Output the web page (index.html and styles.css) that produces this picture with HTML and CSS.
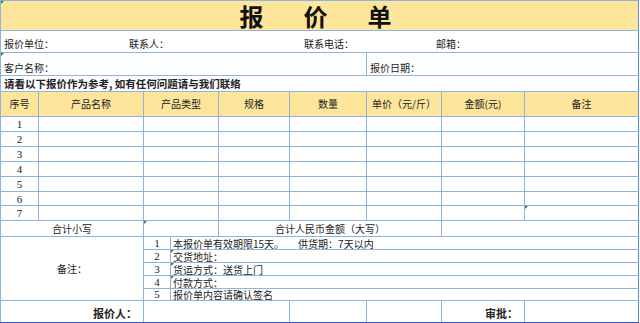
FILE: index.html
```html
<!DOCTYPE html>
<html lang="zh">
<head>
<meta charset="utf-8">
<link rel="stylesheet" href="styles.css">
</head>
<body>
<table class="sheet">
  <colgroup>
    <col style="width:38px"><col style="width:105px"><col style="width:27px"><col style="width:48px"><col style="width:71px">
    <col style="width:77px"><col style="width:27px"><col style="width:48px"><col style="width:83px"><col style="width:114px">
  </colgroup>
  <tr class="r-title">
    <td colspan="10" class="title mark"><div class="title-chars"><span>报</span><span>价</span><span>单</span></div></td>
  </tr>
  <tr class="r-info">
    <td colspan="10" class="info"><div class="info-grid"><span>报价单位：</span><span>联系人：</span><span>联系电话：</span><span>邮箱：</span></div></td>
  </tr>
  <tr class="r-client">
    <td colspan="6" class="bottom mark">客户名称：</td>
    <td colspan="4" class="bottom">报价日期：</td>
  </tr>
  <tr class="r-note">
    <td colspan="10" class="notice">请看以下报价作为参考, 如有任何问题请与我们联络</td>
  </tr>
  <tr class="r-head">
    <td class="c">序号</td>
    <td class="c">产品名称</td>
    <td colspan="2" class="c">产品类型</td>
    <td class="c">规格</td>
    <td class="c">数量</td>
    <td colspan="2" class="c">单价（元/斤）</td>
    <td class="c">金额(元)</td>
    <td class="c">备注</td>
  </tr>
  <tr class="r-data"><td class="c num">1</td><td></td><td colspan="2"></td><td></td><td></td><td colspan="2"></td><td></td><td></td></tr>
  <tr class="r-data"><td class="c num">2</td><td></td><td colspan="2"></td><td></td><td></td><td colspan="2"></td><td></td><td></td></tr>
  <tr class="r-data"><td class="c num">3</td><td></td><td colspan="2"></td><td></td><td></td><td colspan="2"></td><td></td><td></td></tr>
  <tr class="r-data"><td class="c num">4</td><td></td><td colspan="2"></td><td></td><td></td><td colspan="2"></td><td></td><td></td></tr>
  <tr class="r-data"><td class="c num">5</td><td></td><td colspan="2"></td><td></td><td></td><td colspan="2"></td><td></td><td></td></tr>
  <tr class="r-data short"><td class="c num">6</td><td></td><td colspan="2"></td><td></td><td></td><td colspan="2"></td><td></td><td></td></tr>
  <tr class="r-data"><td class="c num">7</td><td></td><td colspan="2"></td><td></td><td></td><td colspan="2"></td><td></td><td class="mark"></td></tr>
  <tr class="r-sum">
    <td colspan="2" class="c">合计小写</td>
    <td colspan="2" class="mark"></td>
    <td colspan="4" class="c">合计人民币金额（大写）</td>
    <td colspan="3"></td>
  </tr>
  <tr class="r-rem">
    <td colspan="2" rowspan="5" class="c">备注：</td>
    <td class="c num">1</td>
    <td colspan="7" class="txt">本报价单有效期限15天。<span class="gap">供货期：7天以内</span></td>
  </tr>
  <tr class="r-rem"><td class="c num">2</td><td colspan="7" class="txt mark">交货地址：</td></tr>
  <tr class="r-rem"><td class="c num">3</td><td colspan="7" class="txt mark">货运方式：送货上门</td></tr>
  <tr class="r-rem"><td class="c num">4</td><td colspan="7" class="txt mark">付款方式：</td></tr>
  <tr class="r-rem short"><td class="c num">5</td><td colspan="7" class="txt">报价单内容请确认签名</td></tr>
  <tr class="r-sign">
    <td colspan="2" class="sign">报价人：</td>
    <td colspan="3"></td>
    <td></td>
    <td colspan="2"></td>
    <td class="sign">审批：</td>
    <td></td>
  </tr>
</table>
</body>
</html>
```

FILE: styles.css
```css
html, body {
  margin: 0;
  padding: 0;
  background: #ffffff;
}

.sheet {
  width: 639px;
  table-layout: fixed;
  border-collapse: collapse;
  font-family: "Noto Sans CJK SC", "Noto Sans", sans-serif;
  font-size: 10px;
  color: #222222;
  border-bottom: 2px solid #2f57c8;
}

.sheet td {
  box-sizing: border-box;
  border: 1px solid #8db3e2;
  padding: 0 3px;
  line-height: 12px;
  overflow: hidden;
  white-space: nowrap;
  position: relative;
}

.sheet td:last-child {
  border-right-color: #5d8ccc;
}

.sheet .c { text-align: center; }

.sheet .num {
  font-family: "Liberation Serif", "Noto Sans CJK SC", serif;
  font-size: 11px;
}

.sheet .r-title td { height: 30px; background: #fee59c; padding: 0; overflow: visible; }
.title-chars {
  display: flex;
  justify-content: center;
  gap: 40px;
  font-size: 24px;
  font-weight: 700;
  line-height: 29px;
  color: #111111;
  padding-right: 8px;
}

.sheet .r-info td { height: 22px; vertical-align: bottom; padding-bottom: 2px; }
.info-grid {
  display: grid;
  grid-template-columns: 125px 175px 132px auto;
}

.sheet .r-client td { height: 23px; vertical-align: bottom; padding-bottom: 1px; }

.sheet .r-note td { height: 16px; }
.sheet .notice {
  font-weight: 700;
  font-size: 10.5px;
  vertical-align: bottom;
  padding-bottom: 1px;
}

.sheet .r-head td { height: 25px; background: #fee59c; }

.sheet .r-data td { height: 15px; }
.sheet .r-data.short td { height: 14px; }

.sheet .r-sum td { height: 16px; }

.sheet .r-rem td { height: 13px; line-height: 11px; }
.sheet .r-rem.short td { height: 12px; }
.sheet .txt { padding-left: 2px; }
.gap { margin-left: 14px; }

.sheet .r-sign td { height: 22px; }
.sheet .sign {
  text-align: right;
  font-weight: 700;
  font-size: 11px;
  padding-right: 6px;
  padding-top: 3px;
}

.mark::before {
  content: "";
  position: absolute;
  left: 0;
  top: 0;
  border-top: 3px solid #1f8f2a;
  border-right: 3px solid transparent;
}
```
